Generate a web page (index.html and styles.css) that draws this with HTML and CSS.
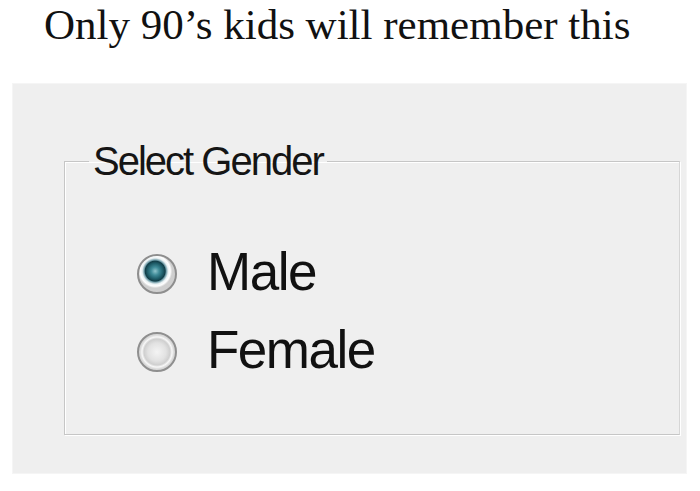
FILE: index.html
```html
<!DOCTYPE html>
<html>
<head>
<meta charset="utf-8">
<link rel="stylesheet" href="styles.css">
</head>
<body>
<h1 class="title">Only 90’s kids will remember this</h1>
<div class="panel">
  <fieldset class="group">
    <legend class="legend">Select Gender</legend>
    <div class="options">
      <label class="option"><span class="radio radio-on"></span><span class="label-text">Male</span></label>
      <label class="option"><span class="radio radio-off"></span><span class="label-text">Female</span></label>
    </div>
  </fieldset>
</div>
</body>
</html>
```

FILE: styles.css
```css
html, body {
  margin: 0;
  padding: 0;
  background: #ffffff;
}
body {
  width: 700px;
  height: 491px;
  overflow: hidden;
}
.title {
  margin: 0;
  padding: 0 0 0 44px;
  height: 83px;
  font-family: "Liberation Serif", "Times New Roman", serif;
  font-weight: normal;
  font-size: 43px;
  line-height: 50px;
  color: #111;
}
.panel {
  margin: 0 13px 0 12px;
  height: 391px;
  background: #efefef;
  box-sizing: border-box;
  padding: 57px 6px 0 51px;
  border: 1px solid #f5f5f5;
}
.group {
  margin: 0;
  height: 294px;
  box-sizing: border-box;
  padding: 0;
  border: 1px solid #c6c6c6;
  border-right-color: #d6d6d6;
  box-shadow: 1px 1px 0 #ffffff, inset 1px 1px 0 #ffffff;
  min-width: 0;
}
.legend {
  margin-left: 24px;
  padding: 0 4px;
  font-family: "Liberation Sans", Arial, sans-serif;
  font-size: 40px;
  line-height: 40px;
  letter-spacing: -2px;
  color: #151515;
}
.options {
  display: flex;
  flex-direction: column;
  padding: 52px 0 0 72px;
}
.option {
  display: flex;
  align-items: center;
  gap: 30px;
  height: 78px;
}
.radio {
  flex: none;
  width: 40px;
  height: 40px;
  border-radius: 50%;
  box-sizing: border-box;
  margin-top: 4px;
}
.radio-on {
  border: 2px solid #8e8e8e;
  background:
    radial-gradient(circle at 45% 42%, #8fc4cc 0, #3f8b98 4px, #1d5a66 8px, #123d47 10px, #6d9aa6 11px, #e9f1f3 13px, #ffffff 15px, #cfcfcf 17px);
}
.radio-off {
  border: 2px solid #8f8f8f;
  background:
    radial-gradient(circle at 50% 50%, #f4f4f4 0, #e2e2e2 9px, #cfcfcf 13px, #f8f8f8 15px, #d8d8d8 17px);
}
.label-text {
  font-family: "Liberation Sans", Arial, sans-serif;
  font-size: 53px;
  line-height: 78px;
  letter-spacing: -1.5px;
  color: #111111;
}
```
